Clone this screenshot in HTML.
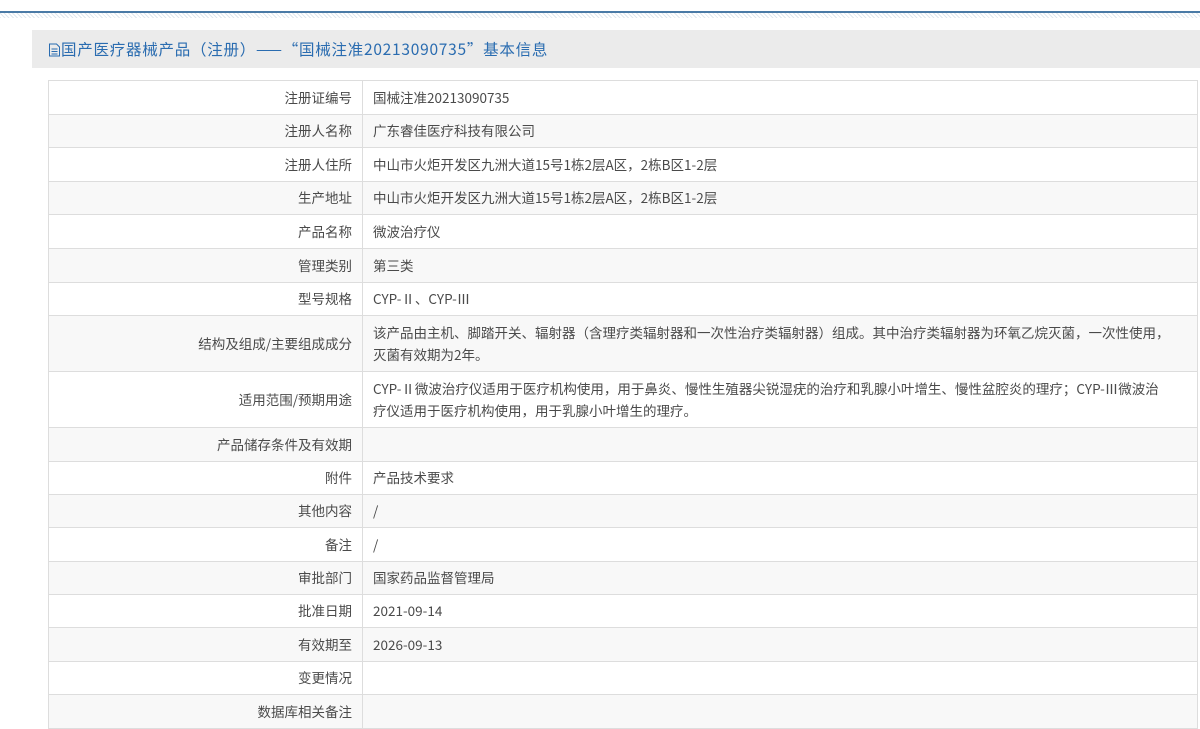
<!DOCTYPE html><html><head><meta charset="utf-8"><style>
body{margin:0;width:1200px;height:728px;overflow:hidden;background:#fff;font-family:"Noto Sans CJK SC","Liberation Sans",sans-serif;font-size:13.5px;color:#4a4a4a}
.topline{position:absolute;left:0;top:11px;width:1200px;height:2px;background:#4a7aa6}
.hatch{position:absolute;left:0;top:13px;width:1200px;height:5px;background:repeating-linear-gradient(45deg,#dfe7ee 0 1px,#fff 1px 3px)}
.panel{position:absolute;left:32px;top:30px;width:1168px;height:38px;background:#ebebeb}
.title{position:absolute;left:48px;top:37px;color:#2a6cb0;font-size:15.5px;line-height:24px;white-space:nowrap;letter-spacing:0.75px}
table{position:absolute;left:48px;top:80px;width:1150px;border-collapse:collapse}
td{border:1px solid #ddd;padding:0 10px 2px;line-height:22px}
td.l{width:293px;text-align:right}
tr:nth-child(even) td{background:#f8f8f8}
</style></head><body>
<div class="topline"></div><div class="hatch"></div>
<div class="panel"></div>
<div class="title"><svg width="13" height="14" viewBox="0 0 13 14" style="vertical-align:-2px"><path d="M1.5 1h7l3 3v9h-10z M3.5 6h6 M3.5 8.5h6 M3.5 11h6" fill="none" stroke="#2a6cb0"/></svg>国产医疗器械产品（注册）——“国械注准20213090735”基本信息</div>
<table>
<tr style="height:34px"><td class="l">注册证编号</td><td>国械注准20213090735</td></tr>
<tr style="height:33px"><td class="l">注册人名称</td><td>广东睿佳医疗科技有限公司</td></tr>
<tr style="height:34px"><td class="l">注册人住所</td><td>中山市火炬开发区九洲大道15号1栋2层A区，2栋B区1-2层</td></tr>
<tr style="height:33px"><td class="l">生产地址</td><td>中山市火炬开发区九洲大道15号1栋2层A区，2栋B区1-2层</td></tr>
<tr style="height:34px"><td class="l">产品名称</td><td>微波治疗仪</td></tr>
<tr style="height:34px"><td class="l">管理类别</td><td>第三类</td></tr>
<tr style="height:33px"><td class="l">型号规格</td><td>CYP-Ⅱ、CYP-Ⅲ</td></tr>
<tr style="height:56px"><td class="l">结构及组成/主要组成成分</td><td>该产品由主机、脚踏开关、辐射器（含理疗类辐射器和一次性治疗类辐射器）组成。其中治疗类辐射器为环氧乙烷灭菌，一次性使用，<br>灭菌有效期为2年。</td></tr>
<tr style="height:56px"><td class="l">适用范围/预期用途</td><td>CYP-Ⅱ微波治疗仪适用于医疗机构使用，用于鼻炎、慢性生殖器尖锐湿疣的治疗和乳腺小叶增生、慢性盆腔炎的理疗；CYP-Ⅲ微波治<br>疗仪适用于医疗机构使用，用于乳腺小叶增生的理疗。</td></tr>
<tr style="height:34px"><td class="l">产品储存条件及有效期</td><td></td></tr>
<tr style="height:33px"><td class="l">附件</td><td>产品技术要求</td></tr>
<tr style="height:33px"><td class="l">其他内容</td><td>/</td></tr>
<tr style="height:34px"><td class="l">备注</td><td>/</td></tr>
<tr style="height:33px"><td class="l">审批部门</td><td>国家药品监督管理局</td></tr>
<tr style="height:33px"><td class="l">批准日期</td><td>2021-09-14</td></tr>
<tr style="height:34px"><td class="l">有效期至</td><td>2026-09-13</td></tr>
<tr style="height:33px"><td class="l">变更情况</td><td></td></tr>
<tr style="height:34px"><td class="l">数据库相关备注</td><td></td></tr>
</table>
</body></html>
